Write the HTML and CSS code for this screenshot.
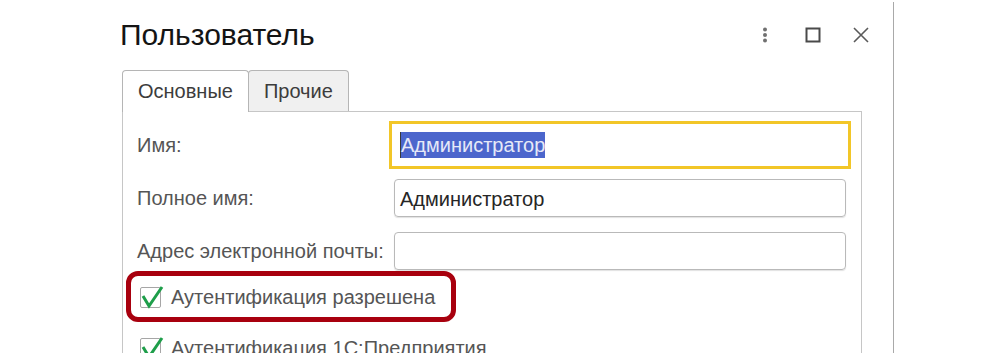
FILE: index.html
```html
<!DOCTYPE html>
<html lang="ru">
<head>
<meta charset="utf-8">
<title>Пользователь</title>
<link rel="stylesheet" href="styles.css">
</head>
<body>
<div class="window">
  <div class="header">
    <div class="title">Пользователь</div>
    <div class="controls">
      <svg class="icon" viewBox="0 0 16 16"><circle cx="8" cy="2.5" r="2" fill="#707070"/><circle cx="8" cy="8" r="2" fill="#707070"/><circle cx="8" cy="13.5" r="2" fill="#707070"/></svg>
      <svg class="icon" viewBox="0 0 16 16"><rect x="1.5" y="1.5" width="13" height="13" fill="none" stroke="#4a4a4a" stroke-width="2"/></svg>
      <svg class="icon" viewBox="0 0 16 16"><path d="M1 1 L15 15 M15 1 L1 15" stroke="#5a5a5a" stroke-width="1.6"/></svg>
    </div>
  </div>
  <div class="tabs">
    <div class="tab active">Основные</div>
    <div class="tab">Прочие</div>
  </div>
  <div class="panel">
    <div class="form">
      <div class="label">Имя:</div>
      <div class="field focus"><span class="selected">Администратор</span></div>
      <div class="label">Полное имя:</div>
      <div class="field">Администратор</div>
      <div class="label">Адрес электронной почты:</div>
      <div class="field"></div>
    </div>
    <div class="mark">
      <div class="check-row">
        <div class="checkbox"><svg viewBox="0 0 22 22"><path d="M2 9 L8 19 L21 0" fill="none" stroke="#1e9e4a" stroke-width="3"/></svg></div>
        <span>Аутентификация разрешена</span>
      </div>
    </div>
    <div class="check-row second">
      <div class="checkbox"><svg viewBox="0 0 22 22"><path d="M2 9 L8 19 L21 0" fill="none" stroke="#1e9e4a" stroke-width="3"/></svg></div>
      <span>Аутентификация 1С:Предприятия</span>
    </div>
  </div>
</div>
</body>
</html>
```

FILE: styles.css
```css
html, body {
  height: 100%;
  margin: 0px;
  padding: 0px;
  overflow: hidden;
}

body {
  background-color: #ffffff;
  font-family: "Liberation Sans", Arial, sans-serif;
}

.window {
  width: 894px;
  height: 351px;
  margin-top: 2px;
  box-sizing: border-box;
  border-right: 1px solid #a9a9a9;
  padding: 0px 31px 0px 122px;
  overflow: hidden;
}

.header {
  display: flex;
  align-items: center;
  justify-content: space-between;
  padding-top: 15px;
  height: 36px;
}

.title {
  font-size: 30px;
  line-height: 36px;
  color: #141414;
  margin-left: -2px;
}

.controls {
  display: flex;
  align-items: center;
  gap: 32px;
  margin-right: -7px;
}

.icon {
  display: block;
  width: 16px;
  height: 16px;
}

.tabs {
  display: flex;
  margin-top: 17px;
}

.tab {
  height: 41px;
  box-sizing: border-box;
  padding: 0px 15px;
  border: 1px solid #b5b5b5;
  border-bottom: 0px;
  border-radius: 4px 4px 0px 0px;
  background-color: #f0f0f0;
  font-size: 20px;
  color: #3c3c3c;
  display: flex;
  align-items: center;
}

.tab + .tab {
  margin-left: -1px;
}

.tab.active {
  height: 42px;
  margin-bottom: -1px;
  background-color: #ffffff;
  position: relative;
  z-index: 1;
}

.panel {
  border: 1px solid #c6c6c6;
  border-bottom: 0px;
  padding: 14px 15px 0px 14px;
  height: 300px;
}

.form {
  display: grid;
  grid-template-columns: 257px 1fr;
  row-gap: 15px;
  align-items: center;
}

.label {
  font-size: 20px;
  color: #555555;
}

.field {
  height: 38px;
  box-sizing: border-box;
  border: 1px solid #b9b9b9;
  border-radius: 4px;
  box-shadow: 0px 1px 1px rgba(0, 0, 0, 0.12);
  padding: 3px 0px 0px 5px;
  display: flex;
  align-items: center;
  font-size: 20px;
  color: #262626;
}

.field.focus {
  border-color: transparent;
  border-radius: 0px;
  box-shadow: none;
  outline: 3px solid #f2c628;
  outline-offset: 2px;
  padding: 0px 0px 0px 5px;
}

.selected {
  display: inline-block;
  line-height: 26px;
  background-color: #4c66cc;
  color: #e6e9f8;
  border-left: 1px solid #3a3a3a;
}

.mark {
  display: flex;
  width: fit-content;
  border: 5px solid #a8000e;
  border-radius: 12px;
  padding: 10px 16px 8px 9px;
  margin: 1px 0px 0px -11px;
}

.check-row {
  display: flex;
  align-items: center;
  gap: 10px;
  font-size: 20px;
  line-height: 23px;
  color: #555555;
}

.check-row.second {
  margin: 15px 0px 0px 3px;
}

.checkbox {
  position: relative;
  flex: none;
  width: 21px;
  height: 21px;
  box-sizing: border-box;
  border: 1px solid #a6a6a6;
  border-radius: 2px;
}

.checkbox svg {
  position: absolute;
  left: 0px;
  top: -1px;
  width: 22px;
  height: 22px;
  overflow: visible;
}
```
